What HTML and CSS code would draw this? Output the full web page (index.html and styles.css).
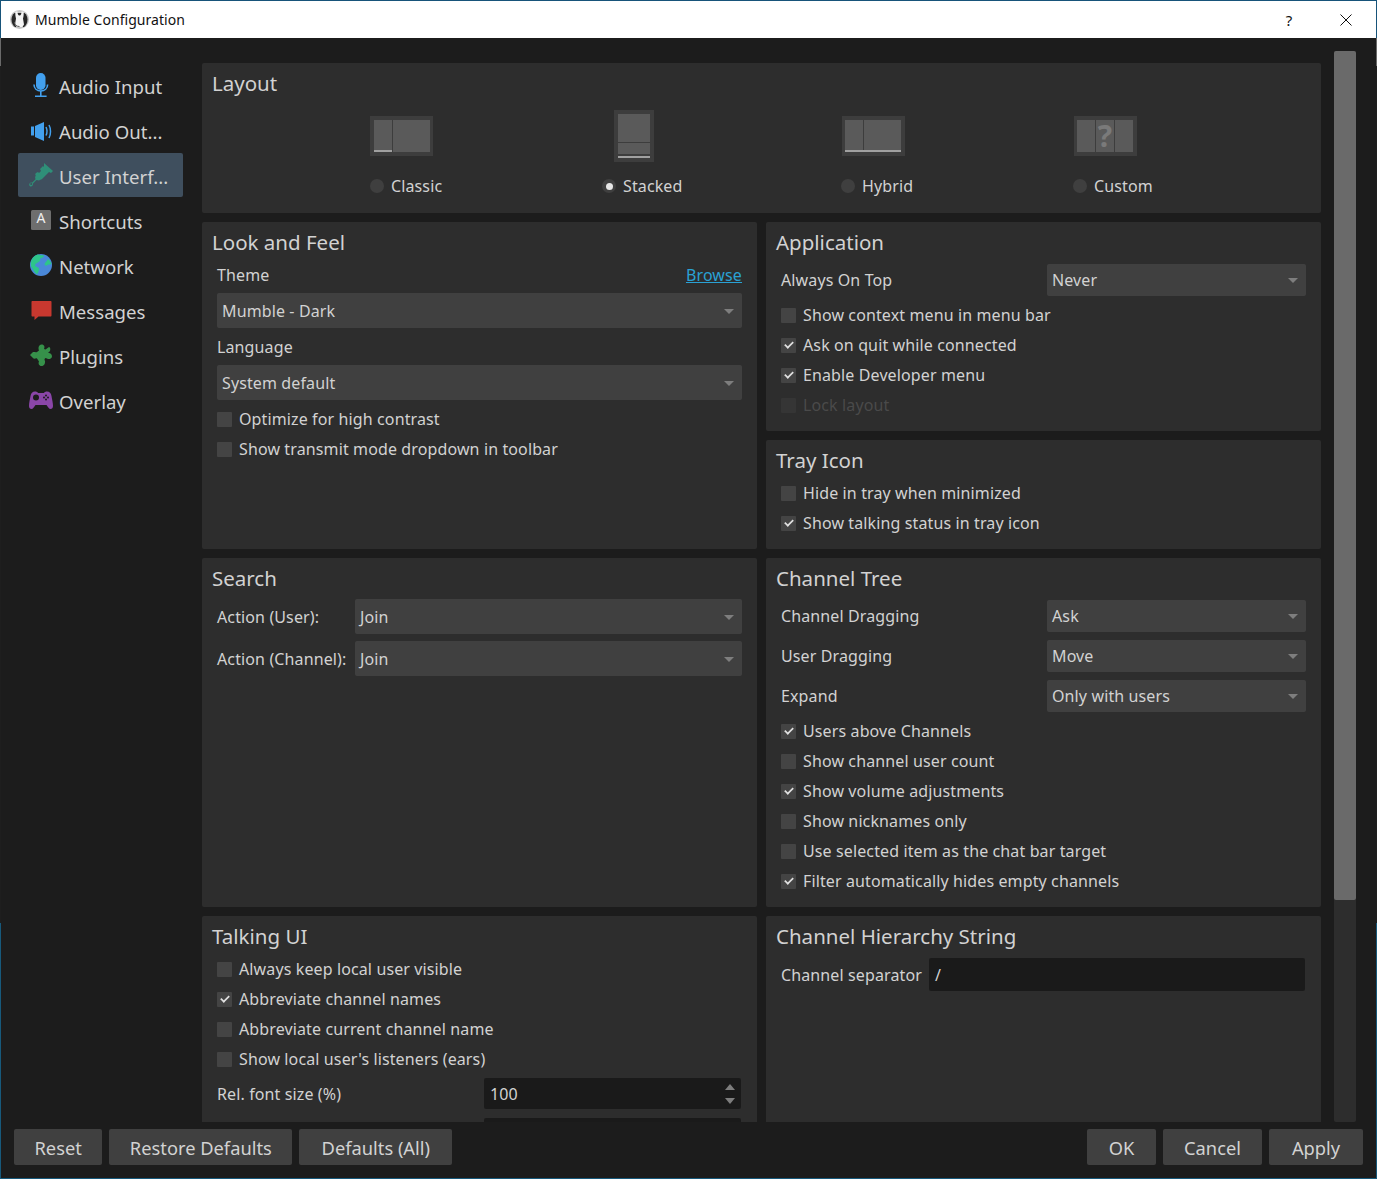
FILE: index.html
```html
<!DOCTYPE html>
<html lang="en">
<head>
<meta charset="utf-8">
<title>Mumble Configuration</title>
<link rel="stylesheet" href="styles.css">
</head>
<body>
<div class="window">
  <header class="titlebar">
    <svg class="app-icon" width="19" height="19" viewBox="0 0 19 19"><circle cx="9.500" cy="9.500" r="9.500" fill="#c4c4c4"/><path d="M4.500 3C2.500 4.500 1.500 7 1.500 9.500c0 3.500 1.500 6 3.500 7.500h9c2-1.500 3.500-4 3.500-7.500 0-2.500-1-5-3-6.500z" fill="#262626"/><path d="M5.500 1.500h2c0 2 .5 4 2 4s2-2 2-4h2c.500 2.500 0 5-.5 7l1 6-1.500 2.500h-6l-1.500-2.500 1-6c-.5-2-1-4.500-.5-7z" fill="#f4f4f4"/><path d="M4.500 12c0 3 2 4.500 5 4.500" fill="none" stroke="#555" stroke-width="1"/></svg>
    <span class="title-text">Mumble Configuration</span>
    <span class="title-help">?</span>
    <svg class="title-close" width="12" height="12" viewBox="0 0 12 12"><path d="M.5.500l11 11M11.500.500l-11 11" stroke="#111" fill="none"/></svg>
  </header>
  <div class="content">
    <nav class="sidebar">
      <div class="nav-item">
        <svg class="nav-icon" viewBox="0 0 24 24"><rect x="7" y="0" width="9.500" height="17" rx="4.700" fill="#42a0ee"/><path d="M5 11.500c0 4 3 6.500 6.800 6.500s6.800-2.500 6.800-6.500" fill="none" stroke="#42a0ee" stroke-width="1.600"/><path d="M11.800 18v5M6 23.300h11.600" stroke="#42a0ee" stroke-width="1.600" fill="none"/></svg>
        <span>Audio Input</span>
      </div>
      <div class="nav-item">
        <svg class="nav-icon" viewBox="0 0 24 24"><path d="M2 8.500h3v9H2zM6 8l9-4v19l-9-4z" fill="#42a0ee"/><path d="M17 9c1.200 2.500 1.200 6 0 8.500M20 7c2 3.500 2 9.500 0 13" fill="none" stroke="#42a0ee" stroke-width="1.500"/></svg>
        <span>Audio Out...</span>
      </div>
      <div class="nav-item nav-selected">
        <svg class="nav-icon" viewBox="0 0 24 24"><path d="M15 0l9 8-2 2-2-1-7 7c-1 1-2 1-3 0l-3-3c-1-1-1-2 0-3l2-1 1 1 2-2-1-2 3-3 1 1z" fill="#2f8f78"/><path d="M7.500 12.500l4 4-1.500 1-2.500-.5-3.500 3.500c.3 1.800-1 3-2 3-1.200 0-2.200-1.200-1.600-2.800.5-1 1.400-1.300 2.600-1l3.500-3.500-.5-2.500z" fill="#2f8f78"/><circle cx="2.200" cy="21" r="1" fill="#3f4f5e"/></svg>
        <span>User Interf...</span>
      </div>
      <div class="nav-item">
        <svg class="nav-icon" viewBox="0 0 24 24"><rect x="2" y="2" width="20" height="20" rx="1.500" fill="#6e6e6e"/><text x="12" y="14.500" text-anchor="middle" class="key-letter">A</text></svg>
        <span>Shortcuts</span>
      </div>
      <div class="nav-item">
        <svg class="nav-icon" viewBox="0 0 24 24"><circle cx="12" cy="12" r="11" fill="#4a88d8"/><path d="M9 1.500c2 1 5 .5 6 1 0 2-2 2-3.500 3-1 1.500 0 3-2 3.500-1 1.500-3 1-3.500 3 0 2 3 1.500 4 3.500.5 2-1 4-2 6-3-2-4-6-6-8C1 7 4.500 2.500 9 1.500zM19 6c1.500 1 3 3 3.500 5-1.500 1-3 0-4 1-1 1.500-3 .5-3-1 .5-2 3-3 3.500-5z" fill="#2dc58a"/></svg>
        <span>Network</span>
      </div>
      <div class="nav-item">
        <svg class="nav-icon" viewBox="0 0 24 24"><path d="M3.500 3h18c.8 0 1 .5 1 1v13.500c0 .5-.3 1-1 1H9.500L5.500 22v-3.500h-2c-.7 0-1-.5-1-1V4c0-.5.2-1 1-1z" fill="#c8382f"/></svg>
        <span>Messages</span>
      </div>
      <div class="nav-item">
        <svg class="nav-icon" viewBox="0 0 24 24"><path d="M1 12 4 9C6 9 7 9.500 8 9L10 7.500C9 5 9.500 2 12.500 1.500 15.500 1.500 16 4 15 6L16.500 6.500 20 4C21.500 4.500 21.500 6 21 8L19 10C21 9.500 23 11 23 13.500 23 15.500 20 17 18 15.500L16.500 15C15 16 15.500 17 16 18 16.500 21 14.500 23 12.500 23 10 23 9 20.500 10 18.500L8 15.500C7 15 6 16 4.500 15.500z" fill="#36914a"/></svg>
        <span>Plugins</span>
      </div>
      <div class="nav-item">
        <svg class="nav-icon" viewBox="0 0 24 24"><path d="M6 3.500c1.500 0 2.500.5 3 1.500h6c.5-1 1.500-1.500 3-1.500 2.500 0 4 1.500 4.500 4.500.5 3 1.500 7 1.500 10 0 2-1 3-2.500 3S19 19 17.500 17h-11C5 19 4 21 2.500 21S0 20 0 18c0-3 1-7 1.500-10C2 5 3.500 3.500 6 3.500z" fill="#8a46a8"/><circle cx="7" cy="9.500" r="3" fill="#1c1c1c"/><circle cx="17" cy="7.500" r="1" fill="#1c1c1c"/><circle cx="17" cy="11.500" r="1" fill="#1c1c1c"/><circle cx="15" cy="9.500" r="1" fill="#1c1c1c"/><circle cx="19" cy="9.500" r="1" fill="#1c1c1c"/></svg>
        <span>Overlay</span>
      </div>
    </nav>
    <main class="panels">
      <section class="panel panel-layout">
        <h2 class="panel-title">Layout</h2>
        <div class="layout-options">
          <div class="layout-option">
            <svg class="layout-icon" width="63" height="40" viewBox="0 0 63 40"><rect width="63" height="40" fill="#3d3d3d"/><rect x="4" y="4" width="18" height="32" fill="#5a5a5a"/><rect x="23" y="4" width="37" height="32" fill="#5a5a5a"/><rect x="4" y="34" width="18" height="2" fill="#a0a0a0"/></svg>
            <label class="radio-row"><span class="radio"></span>Classic</label>
          </div>
          <div class="layout-option">
            <svg class="layout-icon icon-stacked" width="40" height="52" viewBox="0 0 40 52"><rect width="40" height="52" fill="#3d3d3d"/><rect x="4" y="4" width="32" height="28" fill="#5a5a5a"/><rect x="4" y="33" width="32" height="11" fill="#5a5a5a"/><rect x="4" y="46" width="32" height="2" fill="#a0a0a0"/></svg>
            <label class="radio-row"><span class="radio radio-on"></span>Stacked</label>
          </div>
          <div class="layout-option">
            <svg class="layout-icon icon-shifted" width="63" height="40" viewBox="0 0 63 40"><rect width="63" height="40" fill="#3d3d3d"/><rect x="3" y="4" width="18" height="30" fill="#5a5a5a"/><rect x="22" y="4" width="37" height="30" fill="#5a5a5a"/><rect x="3" y="34" width="56" height="2" fill="#a0a0a0"/></svg>
            <label class="radio-row"><span class="radio"></span>Hybrid</label>
          </div>
          <div class="layout-option">
            <svg class="layout-icon icon-shifted" width="63" height="40" viewBox="0 0 63 40"><rect width="63" height="40" fill="#3d3d3d"/><rect x="3" y="4" width="18" height="32" fill="#5a5a5a"/><rect x="22" y="4" width="18" height="32" fill="#5a5a5a"/><rect x="41" y="4" width="18" height="32" fill="#5a5a5a"/><text x="31" y="31" text-anchor="middle" class="layout-question">?</text></svg>
            <label class="radio-row"><span class="radio"></span>Custom</label>
          </div>
        </div>
      </section>

      <section class="panel panel-look">
        <h2 class="panel-title">Look and Feel</h2>
        <div class="field-head"><span>Theme</span><a class="link">Browse</a></div>
        <div class="combo combo-tall"><span>Mumble - Dark</span></div>
        <div class="field-head field-next"><span>Language</span></div>
        <div class="combo combo-tall"><span>System default</span></div>
        <div class="checks checks-after-tall">
          <label class="check-row"><span class="check"></span>Optimize for high contrast</label>
          <label class="check-row"><span class="check"></span>Show transmit mode dropdown in toolbar</label>
        </div>
      </section>

      <section class="panel panel-app">
        <h2 class="panel-title">Application</h2>
        <div class="form-row form-first"><span class="form-label">Always On Top</span><div class="combo combo-short"><span>Never</span></div></div>
        <div class="checks checks-after-short">
          <label class="check-row"><span class="check"></span>Show context menu in menu bar</label>
          <label class="check-row"><span class="check check-on"></span>Ask on quit while connected</label>
          <label class="check-row"><span class="check check-on"></span>Enable Developer menu</label>
          <label class="check-row row-disabled"><span class="check"></span>Lock layout</label>
        </div>
      </section>

      <section class="panel panel-tray">
        <h2 class="panel-title">Tray Icon</h2>
        <div class="checks checks-after-title">
          <label class="check-row"><span class="check"></span>Hide in tray when minimized</label>
          <label class="check-row"><span class="check check-on"></span>Show talking status in tray icon</label>
        </div>
      </section>

      <section class="panel panel-search">
        <h2 class="panel-title">Search</h2>
        <div class="search-grid">
          <span>Action (User):</span><div class="combo combo-tall"><span>Join</span></div>
          <span>Action (Channel):</span><div class="combo combo-tall"><span>Join</span></div>
        </div>
      </section>

      <section class="panel panel-tree">
        <h2 class="panel-title">Channel Tree</h2>
        <div class="tree-rows">
          <div class="form-row"><span class="form-label">Channel Dragging</span><div class="combo combo-short"><span>Ask</span></div></div>
          <div class="form-row"><span class="form-label">User Dragging</span><div class="combo combo-short"><span>Move</span></div></div>
          <div class="form-row"><span class="form-label">Expand</span><div class="combo combo-short"><span>Only with users</span></div></div>
        </div>
        <div class="checks checks-after-short">
          <label class="check-row"><span class="check check-on"></span>Users above Channels</label>
          <label class="check-row"><span class="check"></span>Show channel user count</label>
          <label class="check-row"><span class="check check-on"></span>Show volume adjustments</label>
          <label class="check-row"><span class="check"></span>Show nicknames only</label>
          <label class="check-row"><span class="check"></span>Use selected item as the chat bar target</label>
          <label class="check-row"><span class="check check-on"></span>Filter automatically hides empty channels</label>
        </div>
      </section>

      <section class="panel panel-talk">
        <h2 class="panel-title">Talking UI</h2>
        <div class="checks checks-after-title">
          <label class="check-row"><span class="check"></span>Always keep local user visible</label>
          <label class="check-row"><span class="check check-on"></span>Abbreviate channel names</label>
          <label class="check-row"><span class="check"></span>Abbreviate current channel name</label>
          <label class="check-row"><span class="check"></span>Show local user's listeners (ears)</label>
        </div>
        <div class="spin-row"><span class="spin-label">Rel. font size (%)</span><div class="spin"><span>100</span><span class="spin-arrows"><i class="arrow-up"></i><i class="arrow-down"></i></span></div></div>
        <div class="spin-row spin-second"><span class="spin-label"></span><div class="spin"></div></div>
      </section>

      <section class="panel panel-hier">
        <h2 class="panel-title">Channel Hierarchy String</h2>
        <div class="sep-row"><span class="sep-label">Channel separator</span><div class="line-edit">/</div></div>
      </section>
    </main>
    <div class="scrollbar"><div class="scroll-thumb"></div></div>
  </div>
  <footer class="footer">
    <button class="btn">Reset</button>
    <button class="btn">Restore Defaults</button>
    <button class="btn btn-defaults">Defaults (All)</button>
    <span class="footer-spacer"></span>
    <button class="btn btn-ok">OK</button>
    <button class="btn btn-cancel">Cancel</button>
    <button class="btn btn-apply">Apply</button>
  </footer>
</div>
</body>
</html>
```
FILE: styles.css
```css
* { box-sizing: border-box; }
html, body { margin: 0; height: 100%; overflow: hidden; }
body {
  font-family: "Noto Sans", "Open Sans", sans-serif;
  font-size: 16px;
  letter-spacing: .12px;
  color: #d2d2d2;
  background: #1c1c1c;
}
.window {
  width: 1377px;
  height: 1179px;
  display: flex;
  flex-direction: column;
  border: 1px solid;
  border-image: linear-gradient(to bottom, #17547a 0 38px, #6a6a6a 38px 66px, #1e1e1e 66px 923px, #17597b 923px) 1;
  background: #1c1c1c;
}
.titlebar {
  height: 37px;
  flex: none;
  display: flex;
  align-items: center;
  background: #fff;
  color: #111;
  padding-left: 9px;
}
.app-icon { flex: none; }
.title-text { margin-left: 6px; font-size: 14px; letter-spacing: .05px; flex: 1; }
.title-help { font-size: 15px; width: 12px; text-align: center; margin-right: 45px; }
.title-close { margin-right: 24px; }

.content { flex: 1; min-height: 0; display: flex; }
.sidebar {
  flex: none;
  width: 165px;
  margin: 25px 19px 0 17px;
  display: flex;
  flex-direction: column;
  gap: 1px;
}
.nav-item {
  height: 44px;
  padding: 3px 0 0 11px;
  display: flex;
  align-items: center;
  gap: 6px;
  font-size: 18.600px;
  letter-spacing: 0;
  border-radius: 2px;
  white-space: nowrap;
}
.nav-selected { background: #3f4f5e; }
.nav-icon { width: 24px; height: 24px; flex: none; margin-top: -3px; }
.key-letter { font-size: 14px; fill: #f0f0f0; font-family: "Noto Sans", sans-serif; }

.panels {
  flex: none;
  width: 1119px;
  padding-top: 25px;
  display: grid;
  grid-template-columns: 555px 555px;
  grid-template-rows: 150px 209px 109px 349px 320px;
  gap: 9px;
  overflow: hidden;
  align-content: start;
}
.panel {
  background: #2d2d2d;
  border-radius: 2px;
  padding: 7px 15px 0 10px;
  min-width: 0;
}
.panel-layout { grid-column: 1 / 3; }
.panel-look { grid-row: 2 / 4; }
.panel-title {
  margin: 0;
  font-size: 20.500px;
  font-weight: 400;
  letter-spacing: 0;
  line-height: 27px;
  padding-bottom: 1px;
  color: #d2d2d2;
}

.layout-options {
  display: grid;
  grid-template-columns: 232px 239px 232px auto;
  padding-left: 158px;
  margin-top: 18px;
}
.layout-option { height: 90px; position: relative; display: flex; flex-direction: column; align-items: flex-start; }
.layout-icon { display: block; }
.icon-stacked { margin-left: 12px; margin-top: -6px; }
.icon-shifted { margin-left: 1px; }
.radio-row {
  position: absolute;
  top: 58px;
  display: flex;
  align-items: center;
  gap: 7px;
  height: 24px;
  white-space: nowrap;
}
.radio {
  width: 14px;
  height: 14px;
  border-radius: 50%;
  background: #3f3f3f;
  position: relative;
  flex: none;
}
.radio-on::after {
  content: "";
  position: absolute;
  left: 3.500px;
  top: 3.500px;
  width: 7px;
  height: 7px;
  border-radius: 50%;
  background: #e6e6e6;
}

.field-head, .field-next { margin-left: 5px; }
.field-head { height: 24px; margin-top: 6px; display: flex; justify-content: space-between; align-items: center; }
.field-next { margin-top: 7px; }
.link { color: #2aa1d4; text-decoration: underline; }
.combo {
  background: #404040;
  border-radius: 2px;
  display: flex;
  align-items: center;
  padding-left: 5px;
  position: relative;
}
.combo::after {
  content: "";
  position: absolute;
  right: 8px;
  top: 50%;
  margin-top: -2px;
  border-left: 5px solid transparent;
  border-right: 5px solid transparent;
  border-top: 5px solid #7e7e7e;
}
.combo-tall { height: 35px; margin-left: 5px; margin-top: 6px; }
.combo-short { height: 32px; width: 259px; flex: none; }

.checks { margin-left: 5px; }
.check-row { display: flex; align-items: center; height: 30px; gap: 7px; white-space: nowrap; }
.check {
  width: 15px;
  height: 15px;
  background: #444;
  border-radius: 1px;
  flex: none;
  position: relative;
}
.check-on::after {
  content: "";
  position: absolute;
  left: 3px;
  top: 3.500px;
  width: 8px;
  height: 4px;
  border-left: 2px solid #e0e0e0;
  border-bottom: 2px solid #e0e0e0;
  transform: rotate(-45deg) scale(.85);
}
.row-disabled { color: #4a4a4a; }
.row-disabled .check { background: #353535; }
.checks-after-tall { margin-top: 4px; }
.checks-after-short { margin-top: 4px; }
.checks-after-title { margin-top: 3px; }

.form-row { display: flex; align-items: center; justify-content: space-between; margin-left: 5px; }
.form-first { margin-top: 7px; }
.tree-rows { display: flex; flex-direction: column; gap: 8px; margin-top: 7px; }

.search-grid {
  display: grid;
  grid-template-columns: 133px 1fr;
  column-gap: 5px;
  row-gap: 7px;
  align-items: center;
  margin-left: 5px;
  margin-top: 6px;
}
.search-grid .combo-tall { margin: 0; }

.spin-row { display: flex; align-items: center; margin-left: 5px; margin-top: 4px; }
.spin-second { margin-top: 9px; }
.spin-label { width: 267px; flex: none; }
.spin {
  flex: 1;
  margin-right: 1px;
  height: 31px;
  background: #1a1a1a;
  border-radius: 2px;
  display: flex;
  align-items: center;
  justify-content: space-between;
  padding: 0 6px 0 6px;
}
.spin-arrows { display: flex; flex-direction: column; gap: 8px; }
.arrow-up, .arrow-down { display: block; width: 0; height: 0; border-left: 5px solid transparent; border-right: 5px solid transparent; }
.arrow-up { border-bottom: 6px solid #7e7e7e; }
.arrow-down { border-top: 6px solid #7e7e7e; }

.sep-row { display: flex; align-items: center; margin-left: 5px; margin-top: 7px; }
.sep-label { width: 148px; flex: none; }
.line-edit {
  flex: 1;
  margin-right: 1px;
  height: 33px;
  background: #1a1a1a;
  border-radius: 2px;
  display: flex;
  align-items: center;
  padding-left: 6px;
}
.layout-question { font-size: 30px; font-weight: 700; fill: #7a7a7a; font-family: "Noto Sans", sans-serif; }

.scrollbar {
  flex: none;
  width: 22px;
  margin: 13px 0 0 13px;
  background: #2d2d2d;
  border-radius: 2px;
}
.scroll-thumb { height: 849px; background: #6a6a6a; border-radius: 2px; }

.footer {
  flex: none;
  height: 56px;
  display: flex;
  gap: 7px;
  padding: 7px 13px 13px;
}
.footer-spacer { flex: 1; }
.btn {
  height: 36px;
  padding: 0 20.500px;
  border: 0;
  border-radius: 2px;
  background: #404040;
  color: #d2d2d2;
  font: inherit;
  font-size: 18.300px;
  letter-spacing: 0;
}
.btn-defaults { min-width: 153px; }
.btn-ok { min-width: 69px; }
.btn-cancel { min-width: 99px; }
.btn-apply { min-width: 94px; }
```
